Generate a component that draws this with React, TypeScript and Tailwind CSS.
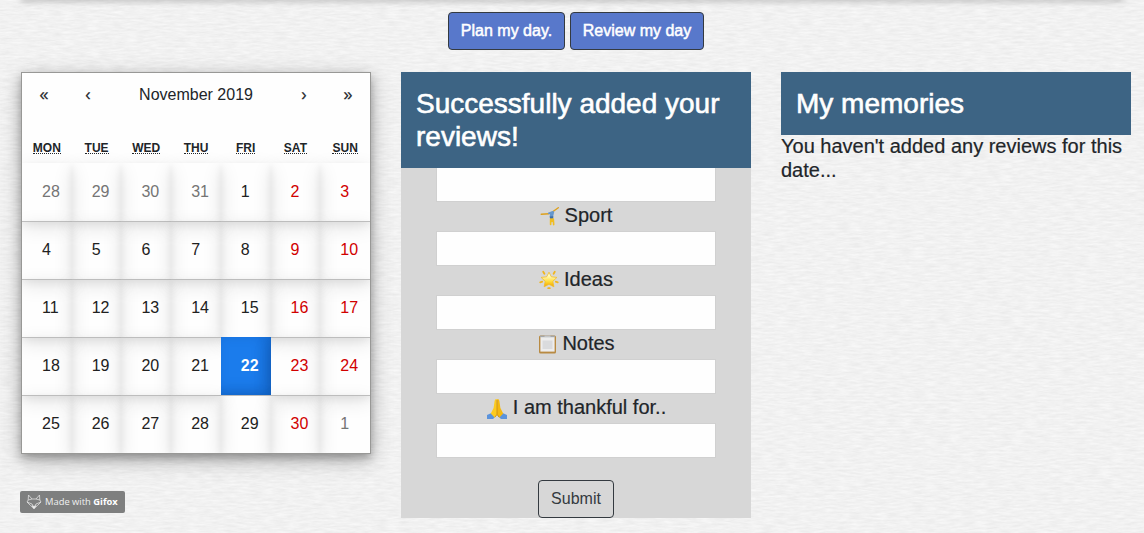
import React from "react";

const weekdays = ["MON", "TUE", "WED", "THU", "FRI", "SAT", "SUN"];

const days: number[] = [
  28, 29, 30, 31, ...Array.from({ length: 30 }, (_, i) => i + 1), 1,
];

function PaperTexture() {
  return (
    <svg className="absolute inset-0 -z-10 h-full w-full" aria-hidden="true">
      <filter id="paper" x="0" y="0" width="100%" height="100%" colorInterpolationFilters="sRGB">
        <feTurbulence type="fractalNoise" baseFrequency="0.08 0.5" numOctaves="3" seed="8" />
        <feColorMatrix
          type="matrix"
          values="0.075 0 0 0 0.909  0.075 0 0 0 0.909  0.075 0 0 0 0.909  0 0 0 0 1"
        />
      </filter>
      <rect width="100%" height="100%" filter="url(#paper)" />
    </svg>
  );
}

function SportIcon() {
  return (
    <svg width="20" height="20" viewBox="0 0 20 20" className="shrink-0">
      <path d="M1.200 8.200 9 7.800M13 5.500 18.300 1.700" stroke="#dda01c" strokeWidth="1.400" strokeLinecap="round" />
      <path d="M8 6.700 12.300 5l2 .6-1.300 5.400-3.400.3.400-3-2-.5z" fill="#6496cd" />
      <path d="m9.800 10.500 3.600-.2-.2 2.500-3.200.2z" fill="#3d6ba6" />
      <path d="M10.600 13v5.400M13.300 13l.4 5.600M12 13v2.500" stroke="#f0bd22" strokeWidth="1.600" strokeLinecap="round" />
    </svg>
  );
}

function StarIcon() {
  return (
    <svg width="20" height="20" viewBox="0 0 20 20" className="shrink-0">
      <defs>
        <linearGradient id="star" x1="0" y1="0" x2="0" y2="1">
          <stop offset="0.25" stopColor="#fffac0" />
          <stop offset="0.65" stopColor="#ffda35" />
          <stop offset="1" stopColor="#efa000" />
        </linearGradient>
      </defs>
      <path
        d="m10 2.200 2.300 4.600 5.600.6-4.100 4 1.100 5.400L10 14.300l-4.900 2.500 1.100-5.400-4.100-4 5.600-.6z"
        fill="url(#star)"
        stroke="#f1bc28"
        strokeWidth="0.8"
        strokeLinejoin="round"
      />
      <path d="m4.200 1.800 1.200 2M15.800 1.800l-1.200 2M1.200 12.300l2-.6M18.800 12.300l-2-.6M9.200 18.200h1.600" stroke="#f0b51e" strokeWidth="1.800" strokeLinecap="round" />
    </svg>
  );
}

function ClipboardIcon() {
  return (
    <svg width="20" height="20" viewBox="0 0 20 20" className="shrink-0">
      <rect x="2" y="1.500" width="17" height="18" rx="1.500" fill="#b88a42" />
      <rect x="3.400" y="2.800" width="14.200" height="14.800" fill="#ededed" />
      <path d="M5.500 6.500h10v8.500h-10z" fill="#dadbdd" />
      <path d="M3 2.400h15" stroke="#a5a7a8" strokeWidth="1.600" />
      <path d="M7.500 1.500h6v1.600h-6z" fill="#c4c5c6" />
    </svg>
  );
}

function PrayIcon() {
  return (
    <svg width="22" height="22" viewBox="0 0 22 22" className="shrink-0">
      <path d="M1 17 5.500 15l4 3.500L7 21H1zM21 17l-4.500-2-4 3.500L15 21h6z" fill="#5b93dc" />
      <path d="M10.800 1.200c-1.500-.5-2.200 1-2.400 3.300L7.600 10 4.800 15.500l4 4.300 2.200-3.300z" fill="#fccb20" />
      <path d="M11.200 1.200c1.500-.5 2.200 1 2.400 3.300l.8 5.500 2.800 5.500-4 4.300-2.200-3.300z" fill="#f4b911" />
      <path d="M11 2v14.500M8.800 19.200l2.200-2.700 2.200 2.700" fill="none" stroke="#c98908" strokeWidth="0.8" />
    </svg>
  );
}

function FoxIcon() {
  return (
    <svg width="16" height="16" viewBox="0 0 16 16" fill="none" stroke="#e0e0e0" strokeWidth="0.8" strokeLinejoin="round">
      <path d="m2.500 1 3.500 4h4l3.500-4 .3 5L15 8l-3.500 3.500L8 14.500l-3.500-3L1 8l1.200-2zM2.200 6 6 5M13.800 6 10 5M1 8l5 2 2 4 2-4 5-2" />
      <path d="m6 11.800 2 .7 2-.7-2 3z" fill="#fff" />
    </svg>
  );
}

function Calendar() {
  return (
    <div className="h-[382px] overflow-hidden border border-[#989896] bg-[#fefefe] font-['Liberation_Sans',Arial,sans-serif] shadow-[0_4px_8px_rgba(0,0,0,0.24),0_6px_20px_rgba(0,0,0,0.28)]">
      <div className="mb-4 flex h-11 text-base leading-[44px]">
        <button className="w-11 [-webkit-text-stroke:0.3px]">«</button>
        <button className="w-11 [-webkit-text-stroke:0.3px]">‹</button>
        <button className="flex-1">November 2019</button>
        <button className="w-11 [-webkit-text-stroke:0.3px]">›</button>
        <button className="w-11 [-webkit-text-stroke:0.3px]">»</button>
      </div>
      <div className="grid h-[30px] grid-cols-7 text-center text-xs leading-[18px] font-bold">
        {weekdays.map((day) => (
          <div key={day} className="flex justify-center pt-[8px]">
            <abbr className="h-[13px] border-b border-dotted border-[#212529] leading-[15px] no-underline">{day}</abbr>
          </div>
        ))}
      </div>
      <div className="grid grid-cols-7">
        {days.map((day, i) => {
          const neighbouring = i < 4 || i === 34;
          const active = i === 25;
          const weekend = i % 7 > 4;
          const color = active
            ? "bg-[#1b7cec] font-bold text-white"
            : neighbouring
              ? "text-[#757575]"
              : weekend
                ? "text-[#d10000]"
                : "text-[#212121]";
          const line = i > 6 && !active ? "border-t border-[#bdbdbd]" : "pt-px";
          const shadow = active
            ? "shadow-[inset_-6px_-4px_14px_rgba(0,40,110,0.24)]"
            : "shadow-[0_4px_8px_rgba(0,0,0,0.06),0_6px_20px_rgba(0,0,0,0.11)]";
          return (
            <button
              key={i}
              className={`h-[58px] pb-0.5 pl-5 text-left text-base leading-[55px] ${shadow} ${color} ${line}`}
            >
              {day}
            </button>
          );
        })}
      </div>
    </div>
  );
}

function PanelTitle({ children }: { children: React.ReactNode }) {
  return (
    <h3 className="bg-[#3d6484] p-[15px] text-[28px] leading-[33px] text-white [-webkit-text-stroke:0.6px_white]">
      {children}
    </h3>
  );
}

function Field({ icon, label }: { icon: React.ReactNode; label: string }) {
  return (
    <label className="flex flex-col items-center">
      <span className="flex h-[29px] items-start gap-[5px] pt-1 text-[20px] leading-[19px] [-webkit-text-stroke:0.2px]">
        {icon}
        {label}
      </span>
      <input className="h-[35px] w-[280px] border border-[#d0d0d0] bg-[#fefefe]" />
    </label>
  );
}

export default function App() {
  return (
    <div className="relative isolate h-[533px] w-[1144px] overflow-hidden font-['Liberation_Sans',Arial,sans-serif] text-[#212529]">
      <PaperTexture />
      <div className="mx-5 -mt-1 h-1 shadow-[0_1px_6px_rgba(0,0,0,0.3)]" />
      <nav className="flex justify-center gap-[5px] pt-3 pl-2 text-base text-white">
        <button className="h-[38px] w-[117px] rounded-[4px] border border-[#343a40] bg-[#5878cb] [-webkit-text-stroke:0.5px_white]">
          Plan my day.
        </button>
        <button className="h-[38px] w-[134px] rounded-[4px] border border-[#343a40] bg-[#5878cb] [-webkit-text-stroke:0.5px_white]">
          Review my day
        </button>
      </nav>
      <main className="mt-[22px] grid grid-cols-[350px_350px_350px] items-start gap-[30px] pl-[21px]">
        <section>
          <Calendar />
          <div className="mt-[37px] -ml-px flex h-[22px] w-[105px] items-center gap-[3px] rounded-[2px] bg-[#7e7f7f] pl-1.5 font-['Open_Sans',sans-serif] text-[9.4px] whitespace-nowrap text-[#f0f0f0]">
            <FoxIcon />
            <span>
              Made with <b className="text-white">Gifox</b>
            </span>
          </div>
        </section>
        <section className="h-[446px] bg-[#d7d7d7]">
          <PanelTitle>Successfully added your reviews!</PanelTitle>
          <form className="flex flex-col items-center">
            <input className="h-[34px] w-[280px] border border-t-0 border-[#d0d0d0] bg-[#fefefe]" />
            <Field icon={<SportIcon />} label="Sport" />
            <Field icon={<StarIcon />} label="Ideas" />
            <Field icon={<ClipboardIcon />} label="Notes" />
            <Field icon={<PrayIcon />} label="I am thankful for.." />
            <button
              type="button"
              className="mt-[22px] h-[38px] w-[76px] rounded-[4px] border border-[#343a40] text-base text-[#343a40]"
            >
              Submit
            </button>
          </form>
        </section>
        <section>
          <PanelTitle>My memories</PanelTitle>
          <p className="-mt-px text-[20px] leading-6 [-webkit-text-stroke:0.2px]">
            You haven't added any reviews for this date...
          </p>
        </section>
      </main>
    </div>
  );
}
